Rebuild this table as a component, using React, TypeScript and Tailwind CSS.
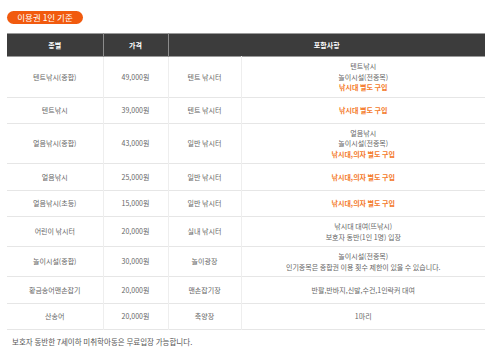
import React from "react";

type Row = {
  name: string;
  price: string;
  place: string;
  notes: string[];
  extra?: string;
  h: string;
};

const rows: Row[] = [
  { name: "텐트낚시(종합)", price: "49,000원", place: "텐트 낚시터", notes: ["텐트낚시", "놀이시설(전종목)"], extra: "낚시대 별도 구입", h: "h-[41px]" },
  { name: "텐트낚시", price: "39,000원", place: "텐트 낚시터", notes: [], extra: "낚시대 별도 구입", h: "h-[26px]" },
  { name: "얼음낚시(종합)", price: "43,000원", place: "일반 낚시터", notes: ["얼음낚시", "놀이시설(전종목)"], extra: "낚시대,의자 별도 구입", h: "h-[40px]" },
  { name: "얼음낚시", price: "25,000원", place: "일반 낚시터", notes: [], extra: "낚시대,의자 별도 구입", h: "h-[27px]" },
  { name: "얼음낚시(초등)", price: "15,000원", place: "일반 낚시터", notes: [], extra: "낚시대,의자 별도 구입", h: "h-[26px]" },
  { name: "어린이 낚시터", price: "20,000원", place: "실내 낚시터", notes: ["낚시대 대여(뜨낚시)", "보호자 동반(1인 1명) 입장"], h: "h-[30px]" },
  { name: "놀이시설(종합)", price: "30,000원", place: "놀이광장", notes: ["놀이시설(전종목)", "인기종목은 종합권 이용 횟수 제한이 있을 수 있습니다."], h: "h-[30px]" },
  { name: "황금송어맨손잡기", price: "20,000원", place: "맨손잡기장", notes: ["반팔,반바지,신발,수건,1인락커 대여"], h: "h-[27px]" },
  { name: "산송어", price: "20,000원", place: "축양장", notes: ["1마리"], h: "h-[26px]" },
];

export default function App() {
  return (
    <div
      className="w-[500px] h-[350px] bg-white overflow-hidden pt-[11px] px-[7px]"
      style={{ fontFamily: '"Noto Sans CJK KR", "Noto Sans", sans-serif' }}
    >
      {/* badge */}
      <div className="flex w-[76px] h-[13px] items-center justify-center rounded-full bg-[#f15a0e] text-white text-[8.5px] leading-none">
        이용권 1인 기준
      </div>

      <table className="mt-[9px] w-[478px] table-fixed border-collapse text-[7px] leading-[10.5px] text-[#666]">
        <colgroup>
          <col className="w-[96px]" />
          <col className="w-[65px]" />
          <col className="w-[73px]" />
          <col />
        </colgroup>
        <thead>
          <tr className="h-[23px] bg-[#3c3c3c] text-white border-y border-[#9a9a9a]">
            <th className="p-0 border-r border-[#8c8c8c] font-bold">종별</th>
            <th className="p-0 border-r border-[#8c8c8c] font-bold">가격</th>
            <th colSpan={2} className="p-0 font-bold">포함사항</th>
          </tr>
        </thead>
        <tbody>
          {rows.map((r) => (
            <tr key={r.name} className={`${r.h} border-b border-[#e6e6e6] text-center`}>
              <td className="p-0 border-r border-[#eeeeee]">{r.name}</td>
              <td className="p-0 border-r border-[#eeeeee]">{r.price}</td>
              <td className="p-0 border-r border-[#eeeeee]">{r.place}</td>
              <td className="p-0">
                {r.notes.map((n) => (
                  <div key={n}>{n}</div>
                ))}
                {r.extra && <div className="text-[#f47a2a] font-semibold">{r.extra}</div>}
              </td>
            </tr>
          ))}
        </tbody>
      </table>

      <p className="mt-[6px] pl-[5px] text-[7.5px] leading-[12px] text-[#555]">
        보호자 동반한 7세이하 미취학아동은 무료입장 가능합니다.
      </p>
    </div>
  );
}
